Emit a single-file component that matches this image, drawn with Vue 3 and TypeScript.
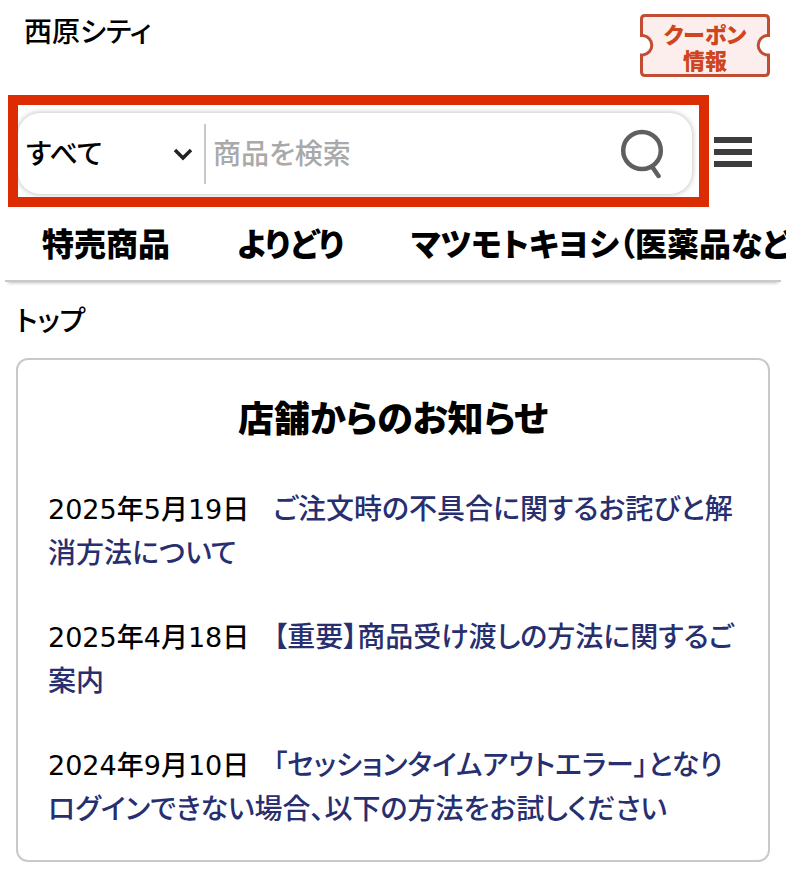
<script setup lang="ts">
import { ref } from 'vue'

interface Notice {
  date: string
  iso: string
  title: string
}

const category = ref<string>('すべて')
const keyword = ref<string>('')
const categories: string[] = ['すべて', '特売商品', 'よりどり']
const navItems: string[] = ['特売商品', 'よりどり', 'マツモトキヨシ（医薬品など）']

const notices: Notice[] = [
  { date: '2025年5月19日', iso: '2025-05-19', title: 'ご注文時の不具合に関するお詫びと解消方法について' },
  { date: '2025年4月18日', iso: '2025-04-18', title: '【重要】商品受け渡しの方法に関するご案内' },
  { date: '2024年9月10日', iso: '2024-09-10', title: '「セッションタイムアウトエラー」となりログインできない場合、以下の方法をお試しください' },
]
</script>

<template>
  <div class="page">
    <header class="top">
      <span class="store">西原シティ</span>
      <a class="coupon" href="#coupon">
        <svg class="ticket" viewBox="0 0 130 63" aria-hidden="true">
          <path
            d="M5 1.500H125Q128.500 1.500 128.500 5V21.500H127A9.800 9.800 0 0 0 127 41H128.500V58Q128.500 61.500 125 61.500H5Q1.500 61.500 1.500 58V41H3A9.800 9.800 0 0 0 3 21.500H1.500V5Q1.500 1.500 5 1.500Z"
            fill="#fbeeec" stroke="#c14d33" stroke-width="3"
          />
        </svg>
        <span class="coupon-text">クーポン<br>情報</span>
      </a>
    </header>

    <div class="search-row">
      <div class="frame">
        <form class="search" role="search" @submit.prevent>
          <div class="category">
            <select v-model="category" aria-label="カテゴリ">
              <option v-for="c in categories" :key="c">{{ c }}</option>
            </select>
            <svg class="chevron" viewBox="0 0 20 14" aria-hidden="true">
              <path d="M2 3L10 11L18 3" fill="none" stroke="#222" stroke-width="3.500" />
            </svg>
          </div>
          <input v-model="keyword" class="keyword" type="text" placeholder="商品を検索" aria-label="商品を検索">
          <button class="find" type="submit" aria-label="検索">
            <svg viewBox="0 0 44 50" aria-hidden="true">
              <g fill="none" stroke="#5e5f5f" stroke-width="4.500">
                <ellipse cx="22" cy="21.500" rx="18.800" ry="18.500" />
                <path d="M32 37.500L38.500 47" stroke-linecap="round" />
              </g>
            </svg>
          </button>
        </form>
      </div>
      <button class="menu" type="button" aria-label="メニュー">
        <span /><span /><span />
      </button>
    </div>

    <nav class="nav">
      <a v-for="item in navItems" :key="item" href="#">{{ item }}</a>
    </nav>

    <main>
      <div class="crumb">トップ</div>
      <section class="card">
        <h1>店舗からのお知らせ</h1>
        <ul>
          <li v-for="n in notices" :key="n.iso">
            <time :datetime="n.iso">{{ n.date }}</time>
            <a href="#">{{ n.title }}</a>
          </li>
        </ul>
      </section>
    </main>
  </div>
</template>

<style>
body {
  margin: 0;
  background: #fff;
}
</style>

<style scoped>
.page {
  overflow: hidden;
  padding-bottom: 11px;
  color: #000;
  font-family: "DejaVu Sans", "Noto Sans CJK JP", sans-serif;
  font-size: 28px;
  font-weight: 500;
  line-height: 44px;
  font-feature-settings: "palt";
}
.page * {
  box-sizing: border-box;
}
a {
  color: inherit;
  text-decoration: none;
}
button,
input,
select {
  margin: 0;
  padding: 0;
  border: 0;
  background: none;
  font: inherit;
  font-feature-settings: inherit;
  color: inherit;
}
.top {
  display: flex;
  justify-content: space-between;
  align-items: flex-start;
  height: 95px;
  padding: 11px 16px 0 24px;
}
.coupon {
  display: grid;
  width: 130px;
  margin-top: 3px;
  color: #cf4520;
  font-size: 22px;
  font-weight: 900;
  line-height: 26px;
  text-align: center;
}
.ticket,
.coupon-text {
  grid-area: 1 / 1;
}
.coupon-text {
  align-self: center;
  padding-top: 6px;
}
.search-row {
  display: flex;
  align-items: center;
  gap: 5px;
  padding: 0 34px 0 8px;
}
.frame {
  flex: 1;
  min-width: 0;
  padding: 8px 7px 3px 0;
  border: 10px solid #dc2c04;
  overflow: hidden;
}
.search {
  display: flex;
  align-items: center;
  height: 81px;
  border-radius: 22px;
  background: #fff;
  box-shadow: 0 0 5px 1px rgba(0, 0, 0, 0.22);
}
.category {
  display: grid;
  align-items: center;
  width: 188px;
  height: 60px;
  border-right: 2px solid #c8c8c8;
}
.category select {
  grid-area: 1 / 1;
  width: 100%;
  padding: 3px 0 0 8px;
  appearance: none;
}
.chevron {
  grid-area: 1 / 1;
  justify-self: end;
  width: 20px;
  margin-right: 11px;
  pointer-events: none;
}
.keyword {
  flex: 1;
  min-width: 0;
  height: 60px;
  padding: 2px 0 0 7px;
}
.keyword::placeholder {
  color: #a9a9a9;
  opacity: 1;
}
.find {
  width: 44px;
  height: 50px;
  margin-right: 28px;
}
.find svg {
  display: block;
}
.menu {
  display: grid;
  gap: 6px;
  width: 38px;
  padding-top: 2px;
}
.menu span {
  height: 6px;
  background: #3d3d3d;
}
.nav {
  display: flex;
  gap: 67px;
  height: 75px;
  margin: 0 5px;
  padding: 16px 0 0 37px;
  border-bottom: 2px solid #c9c9c9;
  box-shadow: 0 4px 3px -3px rgba(0, 0, 0, 0.25);
  font-size: 32px;
  font-weight: 900;
  white-space: nowrap;
}
main {
  padding: 0 16px;
}
.crumb {
  padding: 18px 0 14px;
}
.card {
  padding: 38px 30px 28px;
  border: 2px solid #c9c9c9;
  border-radius: 12px;
}
h1 {
  margin: 0;
  font-size: 36px;
  font-weight: 900;
  text-align: center;
}
ul {
  display: grid;
  gap: 40px;
  margin: 46px 0 0;
  padding: 0;
  list-style: none;
}
time {
  margin-right: 24px;
  font-size: 27px;
}
li a {
  color: #272f70;
}
</style>
